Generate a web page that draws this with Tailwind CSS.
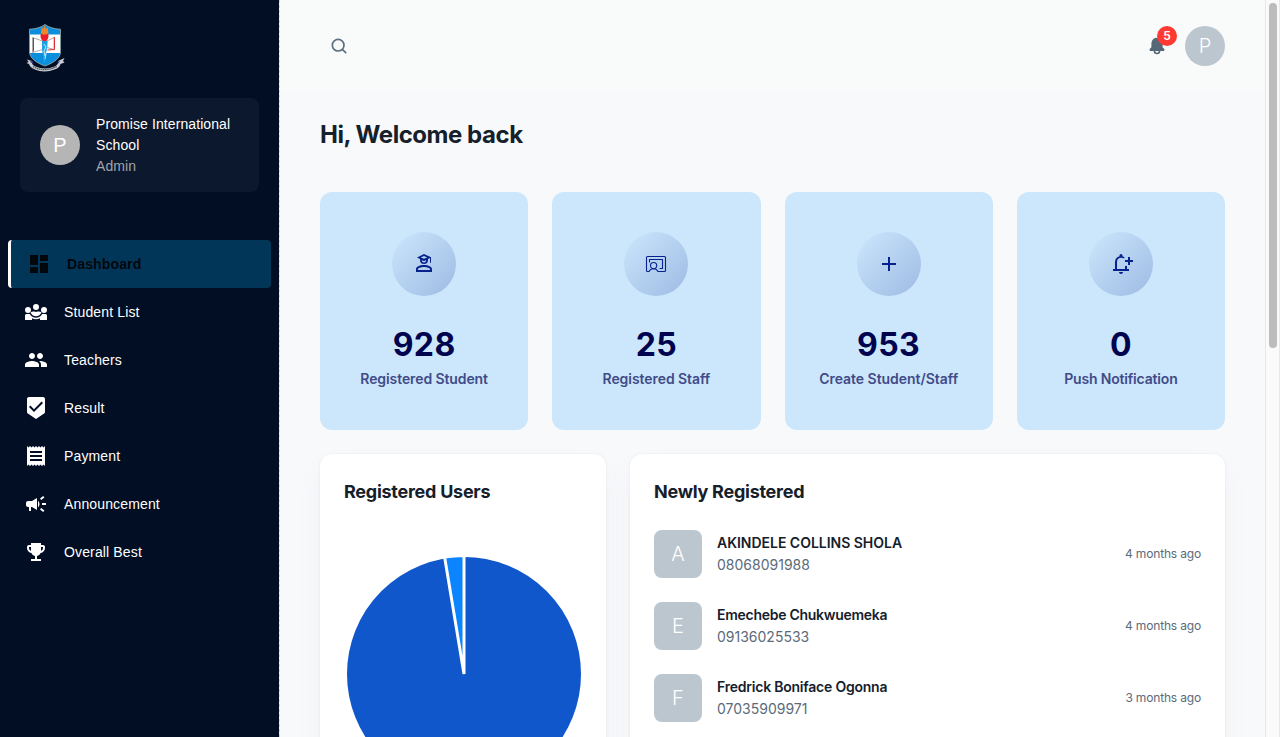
<!DOCTYPE html>
<html lang="en">
<head>
<meta charset="utf-8">
<title>Dashboard</title>
<script src="https://cdn.jsdelivr.net/npm/@tailwindcss/browser@4"></script>
</head>
<body class="flex h-[737px] w-[1280px] overflow-hidden bg-[#f8f9fb] font-[Inter,sans-serif] text-[#15202b]">
<aside class="w-[280px] shrink-0 border-r border-dashed border-[#d3d6dd] bg-[#010e24] bg-clip-padding font-['Liberation_Sans',sans-serif] text-sm text-white">
  <div class="flex h-[98px] items-start pt-6 pl-[26px]">
    <svg class="h-12 w-10" viewBox="0 0 40 48">
      <path d="M19 .5c4 2.8 9 4.500 15.500 4.700V28c0 6-7 11-15.500 14C10.500 39 3.500 34 3.500 28V5.200C10 5 15 3.300 19 .5z" fill="#0b8fdc" stroke="#b9b9a8" stroke-width=".7"/>
      <path d="M4 10.500h30v18.500H4z" fill="#fff"/>
      <path d="M6.500 13.500l10 3.500v8.500l-10 3z" fill="#fff" stroke="#555" stroke-width=".5"/>
      <path d="M7.500 14v13.500" stroke="#d22" stroke-width="1"/>
      <path d="M21 17l7-3.500v12l-7-2z" fill="#fff" stroke="#555" stroke-width=".5"/>
      <path d="M28.500 13v12.500l-7 .5" fill="none" stroke="#d33" stroke-width="1"/>
      <path d="M16 16.500h5.500l-.8 10-1.500 12h-1.200l-1.800-12z" fill="#18a4e8"/>
      <path d="M18 20l2 3-2 4 1 5M20.500 27l-1.500 8" stroke="#e8f8ff" stroke-width=".8" fill="none"/>
      <ellipse cx="18.500" cy="12" rx="4" ry="5.300" fill="#ec1f27"/>
      <path d="M15 9.500c0-2.500.6-3.500.8-6.500l1.600 2 1.200-3.800 1.400 3.800 1.800-2c0 3 .5 4 .5 6.500-2 1.500-5.300 1.500-7.300 0z" fill="#f0862a"/>
      <path d="M1 35.500l5 1.500c-1 2 1 4.500 3.500 5.500 6 2.500 13 2.500 19 0 2.500-1 4.500-3.500 3.500-5.500l6.500-3-1.500 3 1.500 1.500-4 1.500c-.5 3-3 4.500-6 5.500-6 2.500-14 2.500-19.500 0-3-1-5.500-3-6-5.500L.5 39l2-1z" fill="#c9cbd1"/>
      <path d="M3.500 37.500l3-.5 1 3z M31 38l3-1.500-1.500 3z" fill="#3d3f98"/>
      <path d="M7 42.500c7 4.200 17 4.200 24-.4" fill="none" stroke="#55585f" stroke-width="1.300" stroke-dasharray="1.600 .5"/>
    </svg>
  </div>
  <div class="mx-5 flex h-[94px] items-center gap-4 rounded-lg bg-[#0c182d] px-5">
    <div class="flex size-10 shrink-0 items-center justify-center rounded-full bg-[#b5b5b5] text-xl">P</div>
    <div class="leading-[21px] tracking-[.09px]">
      <p>Promise International School</p>
      <p class="text-[#a0a4ab]">Admin</p>
    </div>
  </div>
  <nav class="mt-12 px-2 tracking-[.14px]">
    <a class="flex h-12 items-center gap-4 rounded border-l-[3px] border-white bg-[#023658] pl-4 font-bold text-[#02070c]">
      <svg class="size-6" viewBox="0 0 24 24" fill="currentColor"><path d="M3 13h8V3H3v10zm0 8h8v-6H3v6zm10 0h8V11h-8v10zm0-18v6h8V3h-8z"/></svg>Dashboard</a>
    <a class="flex h-12 items-center gap-4 pl-4">
      <svg class="size-6" viewBox="0 0 24 24" fill="currentColor"><circle cx="12" cy="7" r="3"/><circle cx="4" cy="10" r="3"/><circle cx="20" cy="10" r="3"/><path d="M1 20v-4.500C1 14.600 1.800 14 2.700 14h3.200c1.300 2.500 3.500 3.700 6.100 3.700s4.800-1.200 6.100-3.700h3.200c.9 0 1.700.6 1.700 1.500V20h-7v-1.700c-2.500 1.200-5.500 1.200-8 0V20z"/><path d="M6.500 12.200C8 11.400 10 11.200 12 12c2-.8 4-.6 5.500.2-1 2.600-3 4-5.500 4s-4.500-1.400-5.500-4z"/></svg>Student List</a>
    <a class="flex h-12 items-center gap-4 pl-4">
      <svg class="size-6" viewBox="0 0 24 24" fill="currentColor"><path d="M16 11c1.660 0 2.990-1.340 2.990-3S17.660 5 16 5c-1.660 0-3 1.340-3 3s1.340 3 3 3zm-8 0c1.660 0 2.990-1.340 2.990-3S9.660 5 8 5C6.340 5 5 6.340 5 8s1.340 3 3 3zm0 2c-2.330 0-7 1.170-7 3.500V19h14v-2.500c0-2.330-4.670-3.500-7-3.500zm8 0c-.29 0-.62.02-.97.05 1.160.84 1.970 1.970 1.970 3.450V19h6v-2.500c0-2.330-4.670-3.500-7-3.500z"/></svg>Teachers</a>
    <a class="flex h-12 items-center gap-4 pl-4">
      <svg class="size-6" viewBox="0 0 24 24" fill="currentColor"><path d="M19 1H5c-1.100 0-1.990.9-1.990 2L3 15.930c0 .69.35 1.300.88 1.660L12 23l8.110-5.410c.53-.36.88-.97.88-1.660L21 3c0-1.100-.9-2-2-2zm-9 15l-5-5 1.410-1.410L10 13.170l7.590-7.590L19 7l-9 9z"/></svg>Result</a>
    <a class="flex h-12 items-center gap-4 pl-4">
      <svg class="size-6" viewBox="0 0 24 24" fill="currentColor"><path d="M18 17H6v-2h12v2zm0-4H6v-2h12v2zm0-4H6V7h12v2zM3 22l1.500-1.500L6 22l1.500-1.500L9 22l1.500-1.500L12 22l1.500-1.500L15 22l1.500-1.500L18 22l1.500-1.500L21 22V2l-1.500 1.500L18 2l-1.500 1.500L15 2l-1.500 1.500L12 2l-1.500 1.500L9 2 7.500 3.500 6 2 4.500 3.500 3 2v20z"/></svg>Payment</a>
    <a class="flex h-12 items-center gap-4 pl-4">
      <svg class="size-6" viewBox="0 0 24 24" fill="currentColor"><path d="M18 11v2h4v-2h-4zm-2 6.610c.96.71 2.210 1.650 3.200 2.390.4-.53.8-1.070 1.200-1.600-.99-.74-2.240-1.680-3.200-2.400-.4.54-.8 1.080-1.200 1.610zM20.400 5.600c-.4-.53-.8-1.070-1.200-1.600-.99.74-2.240 1.680-3.200 2.400.4.53.8 1.070 1.200 1.600.96-.72 2.210-1.650 3.200-2.400zM4 9c-1.100 0-2 .9-2 2v2c0 1.100.9 2 2 2h1v4h2v-4h1l5 3V6L8 9H4zm11.500 3c0-1.330-.58-2.530-1.500-3.350v6.690c.92-.81 1.500-2.010 1.500-3.340z"/></svg>Announcement</a>
    <a class="flex h-12 items-center gap-4 pl-4">
      <svg class="size-6" viewBox="0 0 24 24" fill="currentColor"><path d="M19 5h-2V3H7v2H5c-1.100 0-2 .9-2 2v1c0 2.550 1.920 4.630 4.390 4.940.63 1.500 1.980 2.630 3.610 2.960V19H7v2h10v-2h-4v-3.100c1.630-.33 2.980-1.460 3.610-2.960C19.080 12.630 21 10.550 21 8V7c0-1.100-.9-2-2-2zM5 8V7h2v3.820C5.840 10.400 5 9.300 5 8zm14 0c0 1.300-.84 2.400-2 2.820V7h2v1z"/></svg>Overall Best</a>
  </nav>
</aside>

<main class="min-w-0 flex-1">
  <header class="flex h-[92px] items-center justify-between bg-[#f9fbfb] pr-10 pl-[49px]">
    <svg class="size-5" viewBox="0 0 24 24" fill="#5b6e7e"><path d="M20.710 19.290l-3.400-3.390A7.920 7.920 0 0 0 19 11a8 8 0 1 0-8 8 7.920 7.920 0 0 0 4.900-1.690l3.390 3.400a1 1 0 0 0 1.420-1.420zM5 11a6 6 0 1 1 6 6 6 6 0 0 1-6-6z"/></svg>
    <div class="flex items-center gap-[18px]">
      <div class="relative size-5">
        <svg class="size-5" viewBox="0 0 24 24" fill="#566878"><path d="M20.520 15.210l-1.800-1.810V8.940a6.860 6.860 0 0 0-5.820-6.880 6.740 6.740 0 0 0-7.620 6.670v4.670l-1.800 1.810A1.640 1.640 0 0 0 4.640 18H8v.34A3.840 3.840 0 0 0 12 22a3.840 3.840 0 0 0 4-3.660V18h3.360a1.640 1.640 0 0 0 1.160-2.790zM14 18.340A1.880 1.880 0 0 1 12 20a1.880 1.880 0 0 1-2-1.660V18h4z"/></svg>
        <span class="absolute -top-[10px] left-[10px] flex size-5 items-center justify-center rounded-full bg-[#ff3a33] text-xs font-semibold text-white">5</span>
      </div>
      <div class="flex size-10 items-center justify-center rounded-full bg-[#bcc6cf] text-xl font-light text-white">P</div>
    </div>
  </header>

  <div class="px-10 pt-[25px]">
    <h1 class="mb-[39px] text-2xl leading-9 font-bold tracking-[-.46px]">Hi, Welcome back</h1>

    <section class="grid grid-cols-4 gap-6 text-center text-[#00044f]">
      <div class="h-[238px] rounded-xl bg-[#cce7fc] py-10">
        <div class="mx-auto mb-6 flex size-16 items-center justify-center rounded-full bg-linear-135 from-[#0b2a9500] to-[#0b2a953d]">
          <svg class="size-6" viewBox="0 0 24 24" fill="#07228d"><path fill-rule="evenodd" d="M12 2l7 3.300v5.400h-1V6.100l-2 1V8a4 4 0 0 1-8 0v-.9L5 5.500zM12 4L8.800 5.500 12 6.800l3.200-1.300zM9.800 8.200a2.200 2.200 0 0 0 4.400 0L12 9z"/><path fill-rule="evenodd" d="M12 13c4.500 0 8 1.700 8 4v3H4v-3c0-2.300 3.500-4 8-4zm0 1.900c-3 0-6.100 1-6.100 2.300v.9h12.200v-.9c0-1.300-3.100-2.300-6.100-2.300z"/></svg>
        </div>
        <p class="pt-px text-[32px] leading-[47px] font-bold tracking-[.4px]">928</p>
        <p class="text-sm leading-[22px] font-semibold tracking-[-.1px] text-[#414b88]">Registered Student</p>
      </div>
      <div class="h-[238px] rounded-xl bg-[#cce7fc] py-10">
        <div class="mx-auto mb-6 flex size-16 items-center justify-center rounded-full bg-linear-135 from-[#0b2a9500] to-[#0b2a953d]">
          <svg class="size-6" viewBox="0 0 24 24" fill="none" stroke="#07228d" stroke-width="1.100" stroke-linecap="round" stroke-linejoin="round"><path d="M5 19.500H3.500a1 1 0 0 1-1-1v-13a1 1 0 0 1 1-1h17a1 1 0 0 1 1 1v13a1 1 0 0 1-1 1h-6.500c-1.800-3.700-7.200-3.700-9 0"/><circle cx="9.600" cy="13.600" r="3.100"/><path d="M5.500 10V7.500h13v9H16"/></svg>
        </div>
        <p class="pt-px text-[32px] leading-[47px] font-bold tracking-[.4px]">25</p>
        <p class="text-sm leading-[22px] font-semibold tracking-[-.06px] text-[#414b88]">Registered Staff</p>
      </div>
      <div class="h-[238px] rounded-xl bg-[#cce7fc] py-10">
        <div class="mx-auto mb-6 flex size-16 items-center justify-center rounded-full bg-linear-135 from-[#0b2a9500] to-[#0b2a953d]">
          <svg class="size-6" viewBox="0 0 24 24" fill="#07228d"><path d="M19 13h-6v6h-2v-6H5v-2h6V5h2v6h6z"/></svg>
        </div>
        <p class="pt-px text-[32px] leading-[47px] font-bold tracking-[.4px]">953</p>
        <p class="text-sm leading-[22px] font-semibold tracking-[-.03px] text-[#414b88]">Create Student/Staff</p>
      </div>
      <div class="h-[238px] rounded-xl bg-[#cce7fc] py-10">
        <div class="mx-auto mb-6 flex size-16 items-center justify-center rounded-full bg-linear-135 from-[#0b2a9500] to-[#0b2a953d]">
          <svg class="size-6" viewBox="0 0 24 24" fill="#07228d"><path d="M4 19v-2h2v-7c0-2.800 1.800-5.200 4.500-5.800V3.500a1.500 1.500 0 0 1 3 0v.7c.8.200 1.500.5 2.100 1L15 6.500c-3-1.500-7-.5-7 3.500v7h8v-3h2v3h2v2zM10 20h4c0 1.100-.9 2-2 2s-2-.9-2-2zM19 5h2v3h3v2h-3v3h-2v-3h-3V8h3z"/></svg>
        </div>
        <p class="pt-px text-[32px] leading-[47px] font-bold tracking-[.4px]">0</p>
        <p class="text-sm leading-[22px] font-semibold tracking-[-.18px] text-[#414b88]">Push Notification</p>
      </div>
    </section>

    <section class="mt-6 flex gap-6">
      <div class="h-[440px] w-[286px] shrink-0 rounded-xl bg-white p-6 shadow-[0_0_2px_#919eab33,0_12px_24px_-4px_#919eab1f]">
        <h2 class="text-lg leading-[27px] font-bold tracking-[-.26px]">Registered Users</h2>
        <svg class="mt-[49px] ml-px h-60 w-[238px]" viewBox="345 554 238 240" stroke="#fff" stroke-width="3"><circle cx="464" cy="674" r="118.500" fill="#1057cc"/><path d="M464 674L444.600 557.100A118.500 118.500 0 0 1 464 555.500z" fill="#0b84ff"/></svg>
      </div>
      <div class="h-[440px] flex-1 rounded-xl bg-white p-6 shadow-[0_0_2px_#919eab33,0_12px_24px_-4px_#919eab1f]">
        <h2 class="text-lg leading-[27px] font-bold tracking-[-.26px]">Newly Registered</h2>
        <div class="mt-[25px] flex flex-col gap-6 text-sm leading-[22px]">
          <div class="flex items-center gap-[15px]">
            <div class="flex size-12 items-center justify-center rounded-lg bg-[#bcc6cf] text-xl font-light text-white">A</div>
            <div class="flex-1"><p class="font-semibold tracking-[-.02px]">AKINDELE COLLINS SHOLA</p><p class="text-[#5b6b79]">08068091988</p></div>
            <span class="text-xs tracking-[-.17px] text-[#5b6b79]">4 months ago</span>
          </div>
          <div class="flex items-center gap-[15px]">
            <div class="flex size-12 items-center justify-center rounded-lg bg-[#bcc6cf] text-xl font-light text-white">E</div>
            <div class="flex-1"><p class="font-semibold tracking-[-.28px]">Emechebe Chukwuemeka</p><p class="text-[#5b6b79]">09136025533</p></div>
            <span class="text-xs tracking-[-.17px] text-[#5b6b79]">4 months ago</span>
          </div>
          <div class="flex items-center gap-[15px]">
            <div class="flex size-12 items-center justify-center rounded-lg bg-[#bcc6cf] text-xl font-light text-white">F</div>
            <div class="flex-1"><p class="font-semibold tracking-[-.22px]">Fredrick Boniface Ogonna</p><p class="text-[#5b6b79]">07035909971</p></div>
            <span class="text-xs tracking-[-.17px] text-[#5b6b79]">3 months ago</span>
          </div>
        </div>
      </div>
    </section>
  </div>
</main>

<div class="w-[15px] shrink-0 border-x border-[#e8e8e8] bg-[#fafafa] pt-[3px] pl-[3px]">
  <div class="h-[345px] w-2 rounded-full bg-[#bcbcbc]"></div>
</div>
</body>
</html>
